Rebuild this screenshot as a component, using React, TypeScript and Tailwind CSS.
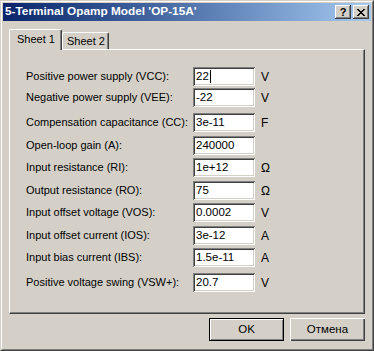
import React from "react";

type Row = { label: string; value: string; unit: string; mt: string; caret?: boolean };

const rows: Row[] = [
  { label: "Positive power supply (VCC):", value: "22", unit: "V", mt: "mt-0", caret: true },
  { label: "Negative power supply (VEE):", value: "-22", unit: "V", mt: "mt-[2px]" },
  { label: "Compensation capacitance (CC):", value: "3e-11", unit: "F", mt: "mt-[6px]" },
  { label: "Open-loop gain (A):", value: "240000", unit: "", mt: "mt-[4px]" },
  { label: "Input resistance (RI):", value: "1e+12", unit: "Ω", mt: "mt-[3px]" },
  { label: "Output resistance (RO):", value: "75", unit: "Ω", mt: "mt-[4px]" },
  { label: "Input offset voltage (VOS):", value: "0.0002", unit: "V", mt: "mt-[3px]" },
  { label: "Input offset current (IOS):", value: "3e-12", unit: "A", mt: "mt-[4px]" },
  { label: "Input bias current (IBS):", value: "1.5e-11", unit: "A", mt: "mt-[3px]" },
  { label: "Positive voltage swing (VSW+):", value: "20.7", unit: "V", mt: "mt-[6px]" },
];

function CloseGlyph() {
  const px: [number, number][] = [];
  const pat = ["XX....XX", ".XX..XX.", "..XXXX..", "...XX...", "..XXXX..", ".XX..XX.", "XX....XX"];
  pat.forEach((r, y) => r.split("").forEach((c, x) => c === "X" && px.push([x, y])));
  return (
    <svg width="8" height="7" viewBox="0 0 8 7" shapeRendering="crispEdges">
      {px.map(([x, y]) => (
        <rect key={`${x}-${y}`} x={x} y={y} width="1" height="1" fill="#000" />
      ))}
    </svg>
  );
}

export default function App() {
  return (
    <div className="w-[374px] h-[351px] bg-[#d4d0c8] border border-t-[#d4d0c8] border-l-[#d4d0c8] border-r-[#404040] border-b-[#404040] font-['Liberation_Sans',Arial,sans-serif] text-black">
      <div className="h-full border border-t-white border-l-white border-r-[#808080] border-b-[#808080] p-px flex flex-col">
        {/* Title bar */}
        <div className="h-[18px] flex items-center bg-linear-to-r from-[#0a246a] to-[#a6caf0] pl-[2px] pr-[2px]">
          <span className="flex-1 text-white font-bold text-[11.8px] leading-none whitespace-nowrap">
            5-Terminal Opamp Model 'OP-15A'
          </span>
          <div className="flex gap-[2px]">
            <div className="w-[16px] h-[14px] bg-[#d4d0c8] shadow-[inset_-1px_-1px_0_#404040,inset_1px_1px_0_#ffffff,inset_-2px_-2px_0_#808080] flex items-center justify-center text-[11px] font-bold leading-none">
              ?
            </div>
            <div className="w-[16px] h-[14px] bg-[#d4d0c8] shadow-[inset_-1px_-1px_0_#404040,inset_1px_1px_0_#ffffff,inset_-2px_-2px_0_#808080] flex items-center justify-center pr-px">
              <CloseGlyph />
            </div>
          </div>
        </div>

        {/* Client */}
        <div className="flex-1 flex flex-col px-[6px] pt-[8px]">
          {/* Tabs */}
          <div className="flex items-end h-[20px] relative z-10">
            <div className="w-[53px] h-[21px] -mb-px bg-[#d4d0c8] border-l border-t border-white border-r border-r-[#404040] rounded-t-[2px] shadow-[inset_-1px_0_0_#808080] pl-[7px] pt-[3px] text-[11px] leading-[13px] whitespace-nowrap">
              Sheet 1
            </div>
            <div className="w-[47px] h-[17px] bg-[#d4d0c8] border-l border-t border-white border-r border-r-[#404040] rounded-t-[2px] shadow-[inset_-1px_0_0_#808080] pl-[4px] pt-[2px] text-[11px] leading-[13px] whitespace-nowrap">
              Sheet 2
            </div>
          </div>

          {/* Panel */}
          <div className="h-[265px] border border-t-white border-l-white border-r-[#404040] border-b-[#404040] shadow-[inset_-1px_-1px_0_#808080] pl-[16px] pt-[17px] flex flex-col">
            {rows.map((r) => (
              <div key={r.label} className={`flex items-center h-[19px] ${r.mt}`}>
                <div className="w-[167px] text-[11px] leading-none whitespace-nowrap">{r.label}</div>
                <div className="w-[62px] h-[19px] bg-white shadow-[inset_1px_1px_0_#808080,inset_-1px_-1px_0_#ffffff,inset_2px_2px_0_#404040,inset_-2px_-2px_0_#d4d0c8] flex items-center pl-[3px] text-[11.5px] leading-none">
                  {r.value}
                  {r.caret && <span className="inline-block w-px h-[13px] bg-black ml-px" />}
                </div>
                <div className="ml-[6px] text-[12px] leading-none">{r.unit}</div>
              </div>
            ))}
          </div>

          {/* Buttons */}
          <div className="flex justify-end gap-[6px] mt-[4px]">
            <div className="w-[75px] h-[23px] border border-black">
              <div className="h-full shadow-[inset_1px_1px_0_#ffffff,inset_-1px_-1px_0_#808080] flex items-center justify-center text-[11.5px] leading-none">
                OK
              </div>
            </div>
            <div className="w-[75px] h-[23px] shadow-[inset_1px_1px_0_#ffffff,inset_-1px_-1px_0_#404040,inset_-2px_-2px_0_#808080] flex items-center justify-center text-[11.5px] leading-none">
              Отмена
            </div>
          </div>
        </div>
      </div>
    </div>
  );
}
